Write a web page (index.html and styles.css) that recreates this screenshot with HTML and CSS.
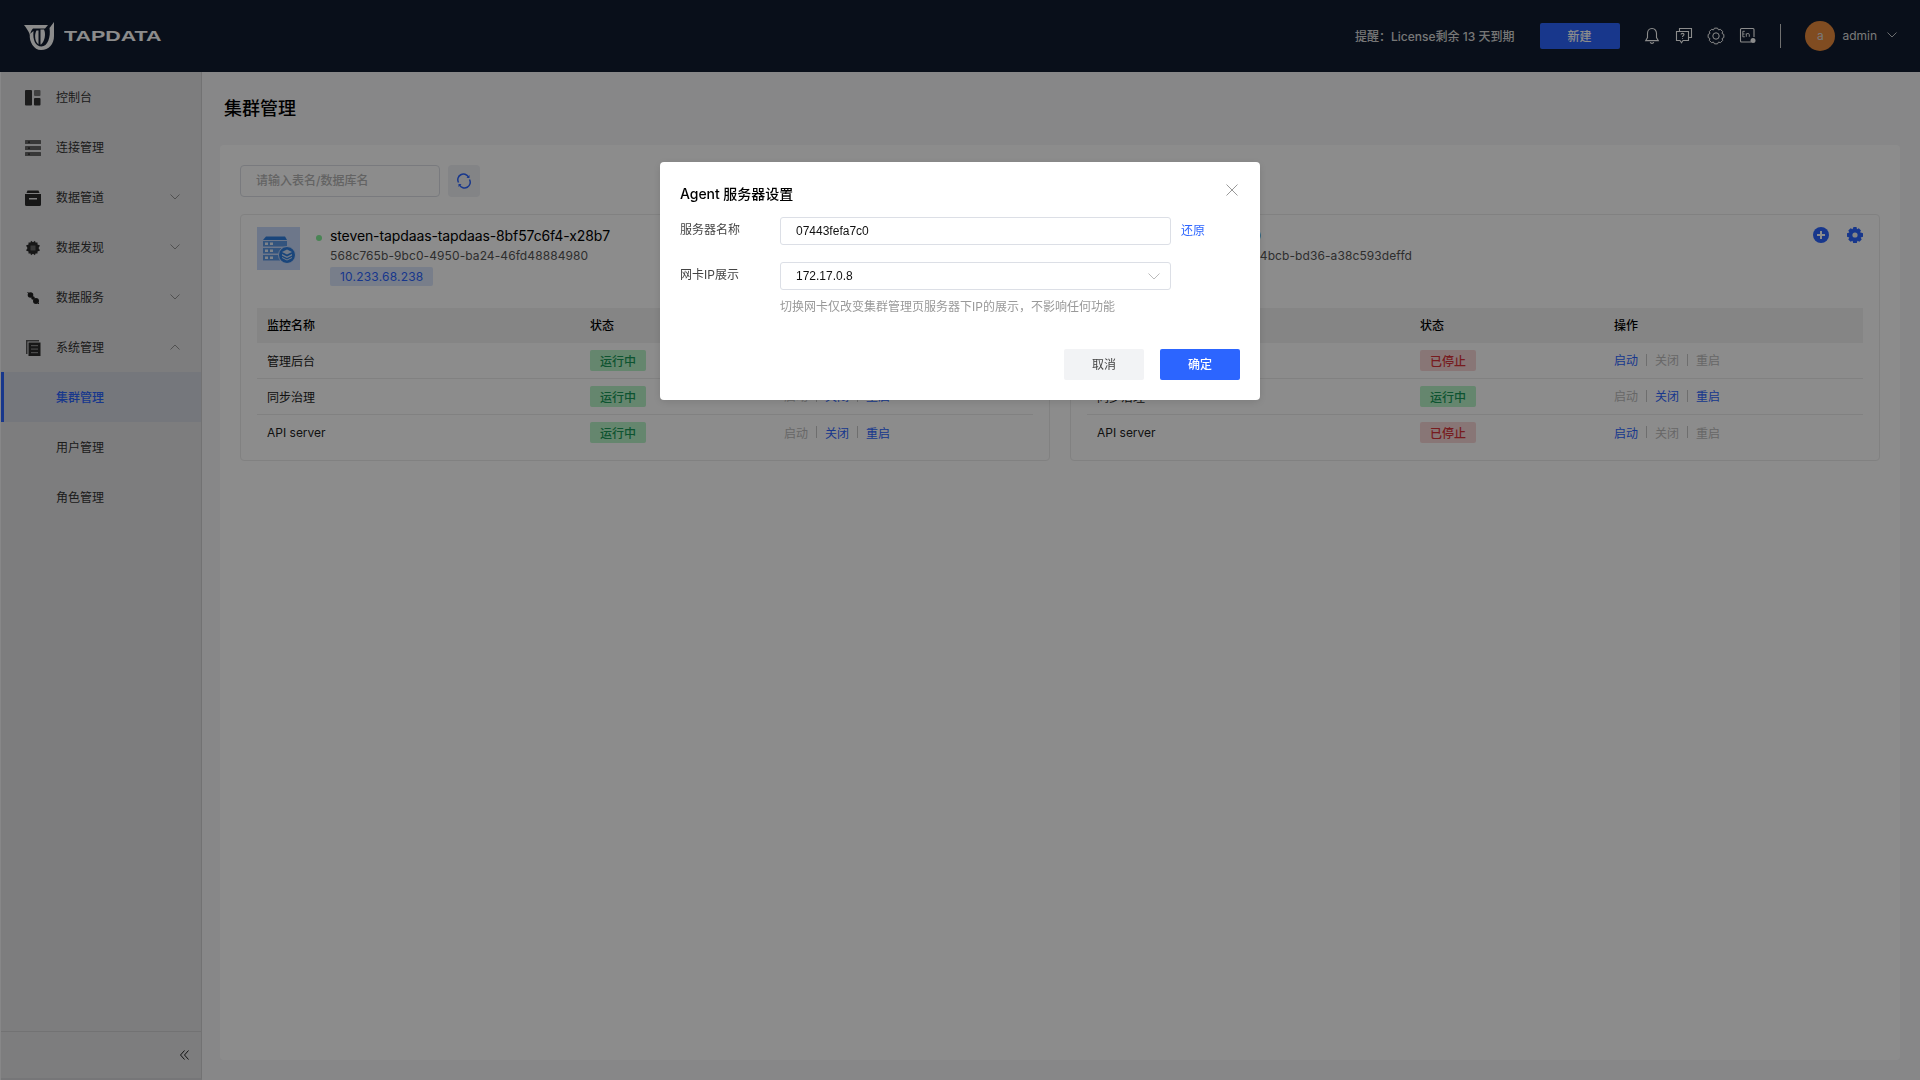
FILE: index.html
```html
<!DOCTYPE html>
<html lang="zh">
<head>
<meta charset="utf-8">
<title>集群管理</title>
<link rel="stylesheet" href="styles.css">
</head>
<body>
<header class="topbar">
  <div class="logo">
    <svg class="logo-mark" width="32" height="28" viewBox="0 0 32 28" fill="#fff">
      <path d="M6.800 12C6 20 11 28 18 28C26 28 31 22 31 14L31 0L26.500 6C28 15 24.500 24.500 18.500 24.500C12.500 24.500 9.500 18 10.500 9Z"/>
      <path d="M1 3H25L22 6.500H10C8.500 8 7.500 10 7 13C5.500 9 3 5.500 1 3Z"/>
      <path d="M13.500 8.500C11 13 12 20 15.500 22.500V8.500Z"/>
      <path d="M17.500 7.500H21C23 11.500 22 19 18 22.500H17.500Z"/>
    </svg>
    <span class="logo-text">TAPDATA</span>
  </div>
  <div class="top-right">
    <span class="notice">提醒：License剩余 13 天到期</span>
    <button class="new-btn">新建</button>
    <div class="top-icons">
      <svg width="18" height="18" viewBox="0 0 18 18" fill="none" stroke="#fff" stroke-width="1.1"><path d="M9 1.5C5.800 1.500 4.500 4 4.500 6.500V10.500L2.700 13.600H15.300L13.500 10.500V6.500C13.500 4 12.200 1.500 9 1.500Z"/><path d="M7.200 15.200C7.700 16.700 10.300 16.700 10.800 15.200"/></svg>
      <svg width="18" height="18" viewBox="0 0 18 18" fill="none" stroke="#fff" stroke-width="1.1"><path d="M4.500 4V1.500H16.500V10.500H14"/><path d="M1.500 4.500H13.500V13.500H8L6.500 15.700L5 13.500H1.500Z"/><path d="M6 7.500C6.200 6 9 6 9 7.500C9 8.700 7.500 8.600 7.500 10M7.500 11V11.800"/></svg>
      <svg width="18" height="18" viewBox="0 0 18 18" fill="none" stroke="#fff" stroke-width="1" stroke-linejoin="round"><path d="M7.470 1.150H10.530L11.530 2.900L13.470 2.370L15.630 4.530L15.100 6.470L16.850 7.470V10.530L15.100 11.530L15.630 13.470L13.470 15.630L11.530 15.100L10.530 16.850H7.470L6.470 15.100L4.530 15.630L2.370 13.470L2.900 11.530L1.150 10.530V7.470L2.900 6.470L2.370 4.530L4.530 2.370L6.470 2.900Z"/><circle cx="9" cy="9" r="3.200"/></svg>
      <svg width="18" height="18" viewBox="0 0 18 18" fill="none" stroke="#fff" stroke-width="1.1"><path d="M12 15H2.500Q1.500 15 1.500 14V2.500Q1.500 1.500 2.500 1.500H14Q15 1.500 15 2.500V10"/><path d="M5.800 4.300H3.800V9.800H5.800M3.800 7H5.500M7.300 9.800V6.300M7.300 7.500C8 6 10.300 6 10.300 7.800V9.800" stroke-width=".9"/><circle cx="14" cy="13.500" r="2.500" fill="#fff" stroke="none"/></svg>
    </div>
    <span class="top-divider"></span>
    <span class="avatar">a</span>
    <span class="user">admin</span>
    <svg class="top-caret" width="10" height="6" viewBox="0 0 10 6" fill="none" stroke="#fff" stroke-width="1"><path d="M.5 .5L5 5L9.500 .5"/></svg>
  </div>
</header>

<div class="layout">
  <aside class="sidebar">
    <nav class="menu">
      <a class="menu-item">
        <svg class="menu-icon" viewBox="0 0 16 16" fill="#333"><rect x="0" y="0" width="7" height="15.500" rx="1"/><rect x="9" y="0" width="6.500" height="6" rx="1" fill="#777"/><rect x="9" y="8" width="6.500" height="7.500" rx="1"/></svg>
        <span>控制台</span>
      </a>
      <a class="menu-item">
        <svg class="menu-icon" viewBox="0 0 16 16" fill="#666"><rect y="0" width="16" height="4" rx=".5"/><rect y="6" width="16" height="4" rx=".5"/><rect y="12" width="16" height="4" rx=".5"/><g fill="#222"><rect x="3" y="1.500" width="2" height="1.200"/><rect x="3" y="7.500" width="2" height="1.200"/><rect x="3" y="13.500" width="2" height="1.200"/></g></svg>
        <span>连接管理</span>
      </a>
      <a class="menu-item">
        <svg class="menu-icon" viewBox="0 0 16 16" fill="#2a2a2a"><path d="M2.500 .5H13.500L14.500 3H1.500Z"/><path d="M0 4H16V14.500Q16 16 14.500 16H1.500Q0 16 0 14.500ZM4 8V9.500H12V8Z" fill-rule="evenodd"/></svg>
        <span>数据管道</span>
        <svg class="caret" viewBox="0 0 10 6" fill="none" stroke="#888" stroke-width=".9"><path d="M.5 .5L5 5L9.500 .5"/></svg>
      </a>
      <a class="menu-item">
        <svg class="menu-icon" viewBox="0 0 16 16" fill="#2a2a2a"><path d="M3.500 2.500H5.500L6 .8L8 2.200L10 .8L10.500 2.500H12.500V4.500L15 5.500L13.500 8L15 10.500L12.500 11.500V13.500H10.500L10 15.200L8 13.800L6 15.200L5.500 13.500H3.500V11.500L1 10.500L2.500 8L1 5.500L3.500 4.500Z"/><rect x="5.500" y="5.500" width="5" height="5" fill="#666"/></svg>
        <span>数据发现</span>
        <svg class="caret" viewBox="0 0 10 6" fill="none" stroke="#888" stroke-width=".9"><path d="M.5 .5L5 5L9.500 .5"/></svg>
      </a>
      <a class="menu-item">
        <svg class="menu-icon" viewBox="0 0 16 16" fill="#222"><circle cx="5.500" cy="5" r="2.800"/><circle cx="11" cy="11" r="3"/><path d="M2.500 2L14 14" stroke="#222" stroke-width="1"/><circle cx="8" cy="8" r="1.800"/></svg>
        <span>数据服务</span>
        <svg class="caret" viewBox="0 0 10 6" fill="none" stroke="#888" stroke-width=".9"><path d="M.5 .5L5 5L9.500 .5"/></svg>
      </a>
      <a class="menu-item">
        <svg class="menu-icon" viewBox="0 0 16 16"><path d="M1 0H14V1.500H2.500V14H1Z" fill="#555"/><rect x="3.500" y="2.500" width="12" height="13.500" fill="#2a2a2a"/><g fill="#888"><rect x="6" y="5" width="7" height="1.200"/><rect x="6" y="8.500" width="7" height="1.200"/><rect x="6" y="12" width="7" height="1.200"/></g></svg>
        <span>系统管理</span>
        <svg class="caret" viewBox="0 0 10 6" fill="none" stroke="#888" stroke-width=".9"><path d="M.5 5.500L5 1L9.500 5.500"/></svg>
      </a>
      <a class="menu-item sub active"><span>集群管理</span></a>
      <a class="menu-item sub"><span>用户管理</span></a>
      <a class="menu-item sub"><span>角色管理</span></a>
    </nav>
    <div class="collapse">
      <svg width="9" height="10" viewBox="0 0 9 10" fill="none" stroke="#222" stroke-width="1"><path d="M4.500 .5L.5 5L4.500 9.500M8.500 .5L4.500 5L8.500 9.500"/></svg>
    </div>
  </aside>

  <main class="main">
    <h1 class="page-title">集群管理</h1>
    <section class="panel">
      <div class="toolbar">
        <div class="search">请输入表名/数据库名</div>
        <button class="refresh">
          <svg width="16" height="16" viewBox="0 0 16 16" fill="none" stroke="#2c65ff" stroke-width="1.500"><path d="M2.500 9.500A5.700 5.700 0 0 1 12.500 4"/><path d="M13.500 6.500A5.700 5.700 0 0 1 3.500 12"/><path d="M13.500 2V5H10.500Z" fill="#2c65ff" stroke="none"/><path d="M2.500 14V11H5.500Z" fill="#2c65ff" stroke="none"/></svg>
        </button>
      </div>
      <div class="servers">
        <article class="server">
          <div class="server-head">
            <svg class="server-icon" viewBox="0 0 43 43">
              <rect width="43" height="43" fill="#c6d9fb"/>
              <path d="M9 9.500H28L30 13H6Z" fill="#2f7fe0"/>
              <g fill="#5e9ae6"><rect x="6" y="14" width="24" height="5.500"/><rect x="6" y="21" width="24" height="5.500"/><rect x="6" y="28" width="24" height="5.500"/></g>
              <g fill="#e6effc"><rect x="8" y="15.500" width="3" height="2.500"/><rect x="13" y="15.500" width="3" height="2.500"/><rect x="8" y="22.500" width="3" height="2.500"/><rect x="13" y="22.500" width="3" height="2.500"/><rect x="8" y="29.500" width="3" height="2.500"/><rect x="13" y="29.500" width="3" height="2.500"/></g>
              <circle cx="30" cy="28" r="8.500" fill="#2f7fe0" stroke="#c6d9fb" stroke-width="1"/>
              <g fill="#cfe1fa"><path d="M30 22.500L35 25L30 27.500L25 25Z"/><path d="M25 27L30 29.500L35 27V28.500L30 31L25 28.500Z"/><path d="M25 30L30 32.500L35 30V31L30 33.500L25 31Z"/></g>
            </svg>
            <span class="dot"></span>
            <div class="server-info">
              <div class="server-name">steven-tapdaas-tapdaas-8bf57c6f4-x28b7</div>
              <div class="server-id">568c765b-9bc0-4950-ba24-46fd48884980</div>
              <div class="server-ip">10.233.68.238</div>
            </div>
          </div>
          <div class="table">
            <div class="tr th"><span>监控名称</span><span>状态</span><span>操作</span></div>
            <div class="tr"><span>管理后台</span><span><i class="tag run">运行中</i></span><span class="ops"><a class="off">启动</a><b></b><a>关闭</a><b></b><a>重启</a></span></div>
            <div class="tr"><span>同步治理</span><span><i class="tag run">运行中</i></span><span class="ops"><a class="off">启动</a><b></b><a>关闭</a><b></b><a>重启</a></span></div>
            <div class="tr"><span>API server</span><span><i class="tag run">运行中</i></span><span class="ops"><a class="off">启动</a><b></b><a>关闭</a><b></b><a>重启</a></span></div>
          </div>
        </article>
        <article class="server">
          <div class="server-head">
            <svg class="server-icon" viewBox="0 0 43 43"><rect width="43" height="43" fill="#c6d9fb"/></svg>
            <span class="dot"></span>
            <div class="server-info offset">
              <div class="server-name">07443fefa7c0</div>
              <div class="server-id">2e6f17a4-71c8-4bcb-bd36-a38c593deffd</div>
            </div>
            <div class="server-actions">
              <svg width="16" height="16" viewBox="0 0 16 16"><circle cx="8" cy="8" r="8" fill="#2c65ff"/><path d="M8 4V12M4 8H12" stroke="#fff" stroke-width="2"/></svg>
              <svg width="16" height="16" viewBox="0 0 16 16"><path d="M6.500 0H9.500L10 2.200L11.800 1.200L14 3.500L13 5.300L16 6.200V9.800L13.700 10.500L14.700 12.400L12.400 14.700L10.500 13.700L9.800 16H6.200L5.500 13.700L3.600 14.700L1.300 12.400L2.300 10.500L0 9.800V6.200L2.300 5.500L1.300 3.600L3.600 1.300L5.500 2.300Z" fill="#2c65ff"/><circle cx="8" cy="8" r="2.600" fill="#f4f4f4"/></svg>
            </div>
          </div>
          <div class="table">
            <div class="tr th"><span>监控名称</span><span>状态</span><span>操作</span></div>
            <div class="tr"><span>管理后台</span><span><i class="tag stop">已停止</i></span><span class="ops"><a>启动</a><b></b><a class="off">关闭</a><b></b><a class="off">重启</a></span></div>
            <div class="tr"><span>同步治理</span><span><i class="tag run">运行中</i></span><span class="ops"><a class="off">启动</a><b></b><a>关闭</a><b></b><a>重启</a></span></div>
            <div class="tr"><span>API server</span><span><i class="tag stop">已停止</i></span><span class="ops"><a>启动</a><b></b><a class="off">关闭</a><b></b><a class="off">重启</a></span></div>
          </div>
        </article>
      </div>
    </section>
  </main>
</div>

<div class="mask"></div>
<div class="dialog">
  <div class="dialog-head">
    <h2>Agent 服务器设置</h2>
    <svg width="12" height="12" viewBox="0 0 12 12" fill="none" stroke="#999" stroke-width="1"><path d="M.5 .5L11.500 11.500M11.500 .5L.5 11.500"/></svg>
  </div>
  <div class="field">
    <label>服务器名称</label>
    <div class="input">07443fefa7c0</div>
    <a class="restore">还原</a>
  </div>
  <div class="field second">
    <label>网卡IP展示</label>
    <div class="input select">172.17.0.8
      <svg width="12" height="7" viewBox="0 0 12 7" fill="none" stroke="#bbb" stroke-width="1"><path d="M.5 .5L6 6L11.500 .5"/></svg>
    </div>
  </div>
  <p class="help">切换网卡仅改变集群管理页服务器下IP的展示，不影响任何功能</p>
  <div class="dialog-foot">
    <button class="btn cancel">取消</button>
    <button class="btn ok">确定</button>
  </div>
</div>
</body>
</html>
```
FILE: styles.css
```css
* { box-sizing: border-box; }
html, body { margin: 0; height: 100%; }
body {
  width: 1920px;
  height: 1080px;
  overflow: hidden;
  display: flex;
  flex-direction: column;
  background: #f6f6f7;
  color: #111;
  font-family: Inter, "Noto Sans CJK SC", sans-serif;
  font-size: 12px;
}
button { font-family: inherit; border: 0; padding: 0; }

.topbar {
  flex: 0 0 72px;
  display: flex;
  align-items: center;
  justify-content: space-between;
  padding-left: 24px;
  background: #121d30;
}
.logo { display: flex; align-items: center; gap: 9px; height: 28px; }
.logo-mark { margin-left: -1px; }
.logo-text {
  display: inline-block;
  color: #fff;
  font-family: "Liberation Sans", sans-serif;
  font-weight: 700;
  font-size: 14px;
  transform: scaleX(1.53);
  transform-origin: left center;
}
.top-right { display: flex; align-items: center; height: 100%; color: #fff; padding-right: 24px; }
.notice { font-weight: 500; color: #d9d9d9; margin-right: 26px; white-space: nowrap; margin-top: -1px; }
.new-btn {
  width: 80px; height: 26px;
  border-radius: 2px;
  background: #2c65ff;
  color: #fff;
  font-size: 12px;
  font-weight: 500;
  margin-right: 23px;
  padding-right: 2px;
  padding-bottom: 1px;
}
.top-icons { display: flex; gap: 14px; margin-right: 23px; margin-top: -1px; }
.top-icons svg { display: block; }
.top-divider { width: 1px; height: 24px; background: #ccc; margin-right: 24px; }
.avatar {
  width: 30px; height: 30px;
  border-radius: 50%;
  background: #e98a3c;
  color: #ddd;
  display: flex; align-items: center; justify-content: center;
  font-size: 12px;
  margin-right: 8px;
  margin-top: -1px;
}
.user { color: #ddd; margin-right: 10px; margin-top: -1px; font-size: 12px; margin-left: -1px; }
.top-caret { margin-top: -2px; opacity: .75; margin-right: -1px; }

.layout { flex: 1; display: flex; min-height: 0; }
.sidebar {
  flex: 0 0 201px;
  margin-left: 1px;
  margin-right: 18px;
  display: flex;
  flex-direction: column;
  background: #e4e4e6;
  border-right: 1px solid #d0d0d2;
  border-bottom: 2px solid #d8d8da;
}
.menu { flex: 1; }
.menu-item {
  height: 50px;
  display: flex;
  align-items: center;
  padding-left: 24px;
  padding-bottom: 1px;
  color: #333;
  font-size: 12px;
}
.menu-icon { width: 16px; height: 16px; margin-right: 15px; flex: none; margin-top: 2px; }
.caret { width: 10px; height: 6px; margin-left: auto; margin-right: 21px; }
.menu-item.sub { padding-left: 55px; }
.menu-item.active { background: #d6d9e2; color: #2c65ff; font-weight: 500; border-left: 3px solid #2c65ff; padding-left: 52px; }
.collapse {
  flex: 0 0 47px;
  border-top: 1px solid #d0d0d2;
  display: flex;
  align-items: center;
  justify-content: flex-end;
  padding-right: 12px;
}

.main { flex: 1; display: flex; flex-direction: column; padding-right: 20px; padding-bottom: 20px; min-width: 0; }
.page-title { margin: 0 0 0 4px; height: 73px; line-height: 74px; font-size: 18px; font-weight: 500; color: #000; }
.panel { flex: 1; background: #fff; border-radius: 4px; padding: 20px; }
.toolbar { display: flex; gap: 8px; height: 32px; margin-bottom: 17px; }
.search {
  width: 200px; height: 32px;
  border: 1px solid #dcdfe6;
  border-radius: 4px;
  padding-left: 15px;
  line-height: 30px;
  color: #b5b5b5;
  font-weight: 500;
}
.refresh { width: 32px; height: 32px; background: #eef0f5; border-radius: 4px; display: flex; align-items: center; justify-content: center; }
.servers { display: grid; grid-template-columns: 810px 810px; gap: 20px; }
.server { border: 1px solid #ececec; border-radius: 4px; height: 247px; padding: 12px 16px 0; }
.server-head { display: flex; height: 81px; }
.server-icon { width: 43px; height: 43px; flex: none; }
.dot { width: 6px; height: 6px; border-radius: 50%; background: #86f09a; margin: 8px 8px 0 16px; flex: none; }
.server-info.offset { margin-left: 10px; }
.server-name { font-size: 14px; line-height: 20px; color: #000; letter-spacing: -.11px; margin-top: -1px; }
.server-id { font-size: 12px; line-height: 18px; color: #555; letter-spacing: .09px; margin-top: 1px; }
.server-ip {
  display: inline-block;
  height: 19px; line-height: 19px;
  padding: 0 10px;
  margin-top: 2px;
  background: #dbe5fb;
  color: #2c65ff;
  font-size: 12px;
  letter-spacing: .2px;
  border-radius: 2px;
}
.server-actions { margin-left: auto; display: flex; gap: 18px; height: 16px; }
.tr { display: grid; grid-template-columns: 323px 194px 1fr; align-items: center; height: 36px; padding: 0 0 1px 10px; border-bottom: 1px solid #ececec; color: #222; }
.tr:last-child { border-bottom: 0; }
.tr.th { height: 35px; background: #f2f2f2; border-bottom: 0; padding-bottom: 2px; font-weight: 500; color: #000; }
.tag { display: inline-flex; align-items: center; justify-content: center; height: 21px; width: 56px; border-radius: 2px; font-style: normal; font-weight: 500; }
.tag.run { background: #b8f4c8; color: #1a9a5a; }
.tag.stop { background: #f8d8d8; color: #d9343a; }
.ops { display: flex; align-items: center; color: #2c65ff; margin-top: -1px; }
.ops a.off { color: #bcbcbc; }
.ops b { width: 1px; height: 12px; background: #c8c8c8; margin: 0 8px; }

.mask { position: fixed; inset: 0; background: rgba(0, 0, 0, .45); }
.dialog {
  position: fixed;
  left: 660px; top: 162px;
  width: 600px; height: 238px;
  background: #fff;
  border-radius: 4px;
  padding: 20px;
  box-shadow: 0 2px 8px rgba(0,0,0,.12);
}
.dialog-head { display: flex; justify-content: space-between; height: 24px; }
.dialog-head h2 { margin: 0; font-size: 14px; line-height: 24px; font-weight: 500; color: #000; letter-spacing: -.05px; }
.dialog-head svg { margin-top: 2px; margin-right: 2px; }
.field { display: flex; align-items: flex-start; margin-top: 11px; }
.field.second { margin-top: 17px; }
.field label { width: 100px; flex: none; line-height: 24px; color: #444; margin-top: 1px; }
.input {
  width: 391px; height: 28px;
  border: 1px solid #dcdfe6;
  border-radius: 3px;
  padding-left: 15px;
  line-height: 26px;
  color: #111;
  font-family: "Liberation Sans", sans-serif;
}
.select { display: flex; justify-content: space-between; align-items: center; padding-right: 10px; }
.restore { color: #2c65ff; margin-left: 10px; line-height: 28px; }
.help { margin: 8px 0 0 100px; line-height: 18px; color: #999; }
.dialog-foot { display: flex; justify-content: flex-end; gap: 16px; margin-top: 33px; }
.btn { width: 80px; height: 31px; border-radius: 2px; font-size: 12px; padding-bottom: 2px; }
.cancel { background: #f2f3f5; color: #444; }
.ok { background: #2c65ff; color: #fff; font-weight: 500; }
```
